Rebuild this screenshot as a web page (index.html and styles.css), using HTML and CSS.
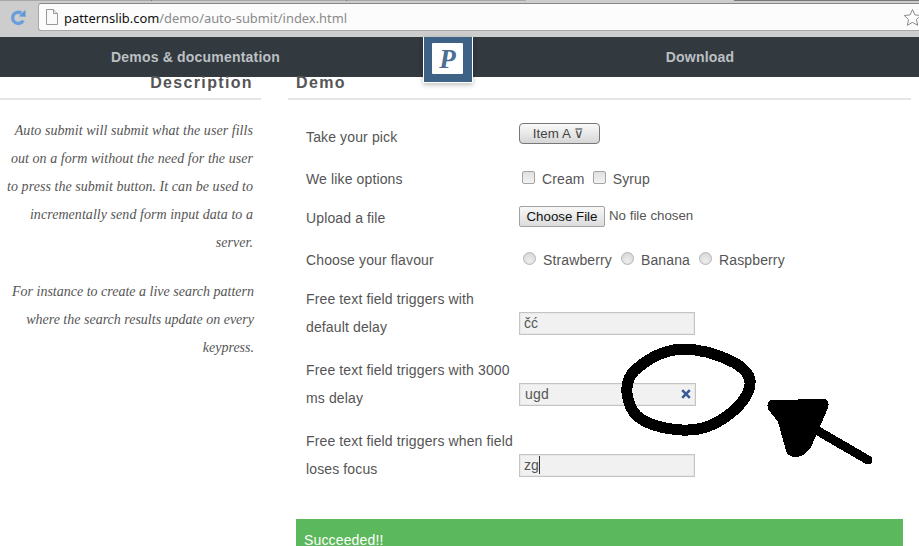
FILE: index.html
```html
<!DOCTYPE html>
<html lang="en">
<head>
<meta charset="utf-8">
<title>Auto submit</title>
<link rel="stylesheet" href="styles.css">
</head>
<body>
<div class="toolbar">
  <div class="tabline"><span class="tab-a"></span><span class="tab-b"></span><span class="tab-c"></span><span class="tab-d"></span><span class="tab-e"></span></div>
  <div class="toolrow">
    <svg class="reload" width="17" height="17" viewBox="0 0 20 20"><path d="M15.5 13.5A6.6 6.6 0 1 1 13.5 5" fill="none" stroke="#6a9fdc" stroke-width="4"/><path d="M10.5 8.8 18.5 9 18 1Z" fill="#5f97d6"/></svg>
    <div class="omnibox">
      <svg class="pageicon" width="12" height="16" viewBox="0 0 12 16"><path d="M.5.5h7l4 4v11H.5Z" fill="#fafafa" stroke="#999"/><path d="M7.5.5v4h4" fill="#e8e8e8" stroke="#999"/></svg>
      <span class="url"><span class="host">patternslib.com</span>/demo/auto-submit/index.html</span>
      <svg class="star" width="19" height="19" viewBox="0 0 19 19"><path d="M9.5 1.5l2.4 5.4 5.9.6-4.4 4 1.3 5.8-5.2-3-5.2 3 1.3-5.8-4.4-4 5.9-.6Z" fill="#fff" stroke="#8a8a8a"/></svg>
    </div>
  </div>
</div>
<nav class="nav">
  <a class="nav-link">Demos &amp; documentation</a>
  <div class="logo"><div class="logo-box">P</div></div>
  <a class="nav-link">Download</a>
</nav>
<main class="page">
  <aside class="side">
    <h2 class="head head-side">Description</h2>
    <p class="para para-first">Auto submit will submit what the user fills out on a form without the need for the user to press the submit button. It can be used to incrementally send form input data to a server.</p>
    <p class="para">For instance to create a live search pattern where the search results update on every keypress.</p>
  </aside>
  <section class="demo">
    <h2 class="head head-demo">Demo</h2>
    <form class="form">
      <div class="lab">Take your pick</div>
      <div class="ctl"><button type="button" class="pick">Item A ⊽</button></div>
      <div class="lab">We like options</div>
      <div class="ctl opts"><span class="box"></span><span class="opt-c">Cream</span><span class="box"></span><span class="opt-c">Syrup</span></div>
      <div class="lab">Upload a file</div>
      <div class="ctl file"><button type="button" class="choose">Choose File</button><span>No file chosen</span></div>
      <div class="lab">Choose your flavour</div>
      <div class="ctl opts"><span class="radio"></span><span class="opt-r">Strawberry</span><span class="radio"></span><span class="opt-r">Banana</span><span class="radio"></span><span class="opt-r">Raspberry</span></div>
      <div class="lab">Free text field triggers with<br>default delay</div>
      <div class="ctl field-wrap"><div class="field">čć</div></div>
      <div class="lab">Free text field triggers with 3000<br>ms delay</div>
      <div class="ctl field-wrap"><div class="field field-wide"><span class="val">ugd</span><svg class="clear" width="10" height="10" viewBox="0 0 10 10"><path d="M1.2 1.2 8.8 8.8M8.8 1.2 1.2 8.8"/></svg></div></div>
      <div class="lab">Free text field triggers when field<br>loses focus</div>
      <div class="ctl field-wrap"><div class="field"><span class="caret">zg</span></div></div>
    </form>
    <div class="alert">Succeeded!!</div>
  </section>
</main>
<svg class="scribble" width="919" height="546" viewBox="0 0 919 546">
  <path class="ring" d="M627 393C626 382 630 373 640 366C650 358 665 350 682 349C700 349 718 354 735 363C746 370 751 376 750 384C749 396 738 409 724 418C712 426 700 431 682 430C665 429 648 425 637 416C631 410 628 402 627 393Z"/>
  <path class="shaft" d="M818 431 868 460"/>
  <path class="head-shape" d="M771 400 825 399Q830 400 828 408L814 440Q808 457 795 457Q786 457 785 447L778 422 768 409Q766 401 771 400Z"/>
</svg>
</body>
</html>
```
FILE: styles.css
```css
* { box-sizing: border-box; }
html, body { margin: 0; padding: 0; }
body {
  width: 919px;
  height: 546px;
  overflow: hidden;
  position: relative;
  background: #fff;
  font-family: "Liberation Sans", Arial, sans-serif;
  color: #555;
}
.toolbar {
  height: 37px;
  background: #cdcdcd;
}
.tabline { display: flex; height: 1px; }
.tab-a { width: 152px; background: #a8a8a8; border-right: 1px solid #777; }
.tab-b { width: 195px; background: #a8a8a8; border-right: 1px solid #777; }
.tab-c { width: 179px; background: #a8a8a8; }
.tab-d { width: 208px; background: #cdcdcd; }
.tab-e { flex: 1; background: #777; }
.toolrow {
  display: flex;
  align-items: center;
  height: 36px;
  padding: 0 0 4px 10px;
}
.reload { flex: none; margin-right: 11px; }
.omnibox {
  flex: 1;
  height: 28px;
  margin-right: -3px;
  display: flex;
  align-items: center;
  padding-left: 7px;
  background: #fcfcfc;
  border: 1px solid #a8a8a8;
  border-top-color: #888;
  border-right: 0;
  border-radius: 3px 0 0 3px;
}
.pageicon { flex: none; margin-right: 6px; }
.url {
  font-family: "Noto Sans", "Open Sans", sans-serif;
  font-size: 12.9px;
  line-height: 20px;
  padding-top: 1px;
  color: #8a8a8a;
  white-space: nowrap;
}
.host { color: #111; }
.star { flex: none; margin-left: auto; }
.nav {
  display: grid;
  grid-template-columns: 391px 81px 456px;
  height: 40px;
  background: #32393f;
}
.nav-link {
  font-size: 14px;
  font-weight: bold;
  line-height: 40px;
  text-align: center;
  color: #bcc0c3;
  letter-spacing: 0.2px;
}
.logo {
  width: 50px;
  height: 46px;
  margin-left: 32px;
  padding: 6px 9px 8px 8px;
  position: relative;
  z-index: 2;
  background: #3e6285;
  border: solid #fff;
  border-width: 0 1px 1px 1px;
  box-shadow: 0 2px 5px rgba(0,0,0,.25);
}
.logo-box {
  height: 31px;
  background: #fff;
  border-radius: 1px;
  text-align: center;
  font-family: "Liberation Serif", serif;
  font-style: italic;
  font-weight: bold;
  font-size: 27px;
  line-height: 33px;
  color: #4a6f93;
}
.page {
  display: grid;
  grid-template-columns: 261px 623px;
  column-gap: 27px;
}
.head {
  margin: 0;
  height: 23px;
  font-size: 16px;
  line-height: 12px;
  font-weight: bold;
  letter-spacing: 1.35px;
  color: #555;
  border-bottom: 2px solid #e6e6e6;
}
.head-side { text-align: right; padding-right: 8px; }
.head-demo { padding-left: 8px; }
.para {
  margin: 0 7px 21px 0;
  font-family: "Liberation Serif", serif;
  font-style: italic;
  font-size: 14px;
  line-height: 28px;
  text-align: right;
  color: #555;
}
.para-first { margin-top: 17px; margin-right: 8px; letter-spacing: .05px; }
.form {
  display: grid;
  grid-template-columns: 213px 1fr;
  grid-template-rows: 42px 39px 42px 39px 71px 71px 71px;
  padding: 23px 0 0 18px;
  font-size: 14px;
  line-height: 28px;
}
.lab { color: #555; white-space: nowrap; letter-spacing: .13px; }
.ctl { display: flex; align-items: center; height: 28px; }
.pick {
  width: 81px;
  height: 21px;
  padding: 0 2px 0 0;
  margin-top: -7px;
  font: 13.3px "Liberation Sans", sans-serif;
  letter-spacing: .1px;
  color: #444;
  background: linear-gradient(#fafafa, #d6d6d6);
  border: 1px solid #777;
  border-radius: 4px;
}
.opts { font-size: 14px; letter-spacing: .13px; }
.box {
  width: 13px;
  height: 13px;
  margin: -4px 0 0 3px;
  background: linear-gradient(#e0e0e0, #f2f2f2);
  border: 1px solid #a5a5a5;
  border-radius: 2px;
}
.opt-c { margin: 0 8px 0 7px; }
.opt-c + .box { margin-left: 0; }
.radio {
  width: 13px;
  height: 13px;
  margin: -4px 0 0 4px;
  background: radial-gradient(circle at 50% 70%, #eee, #d2d2d2);
  border: 1px solid #b5b5b5;
  border-radius: 50%;
}
.opt-r { margin: 0 9px 0 7px; }
.opt-r + .radio { margin-left: 0; }
.file { font-size: 13.3px; margin-top: -2px; }
.choose {
  height: 21px;
  width: 86px;
  padding: 0;
  margin-right: 4px;
  font: 13.3px "Liberation Sans", sans-serif;
  color: #111;
  background: linear-gradient(#f8f8f8, #dcdcdc);
  border: 1px solid #a3a3a3;
  border-radius: 2px;
}
.field-wrap { height: 56px; align-items: flex-end; padding-bottom: 6px; }
.field {
  width: 176px;
  height: 23px;
  padding: 0 4px 1px;
  display: flex;
  align-items: center;
  justify-content: space-between;
  font-size: 14px;
  line-height: 20px;
  color: #555;
  background: #f1f1f1;
  border: 1px solid #c4c4c4;
  box-shadow: inset 0 0 0 1px #e8e8e8;
}
.field-wide { width: 177px; padding-left: 5px; padding-right: 4px; }
.val { letter-spacing: .2px; }
.clear { fill: none; stroke: #3a5a9a; stroke-width: 2.6; }
.caret { border-right: 1px solid #333; height: 18px; line-height: 18px; }
.alert {
  margin: 21px 8px 0 8px;
  height: 27px;
  padding: 15px 8px 0;
  font-size: 14px;
  letter-spacing: .15px;
  line-height: 12px;
  background: #5cb85c;
  color: #fff;
}
.scribble { position: absolute; left: 0; top: 0; pointer-events: none; z-index: 3; shape-rendering: crispEdges; }
.ring { fill: none; stroke: #000; stroke-width: 11; stroke-linejoin: round; }
.shaft { fill: none; stroke: #000; stroke-width: 9; stroke-linecap: round; }
.head-shape { fill: #000; }
```
